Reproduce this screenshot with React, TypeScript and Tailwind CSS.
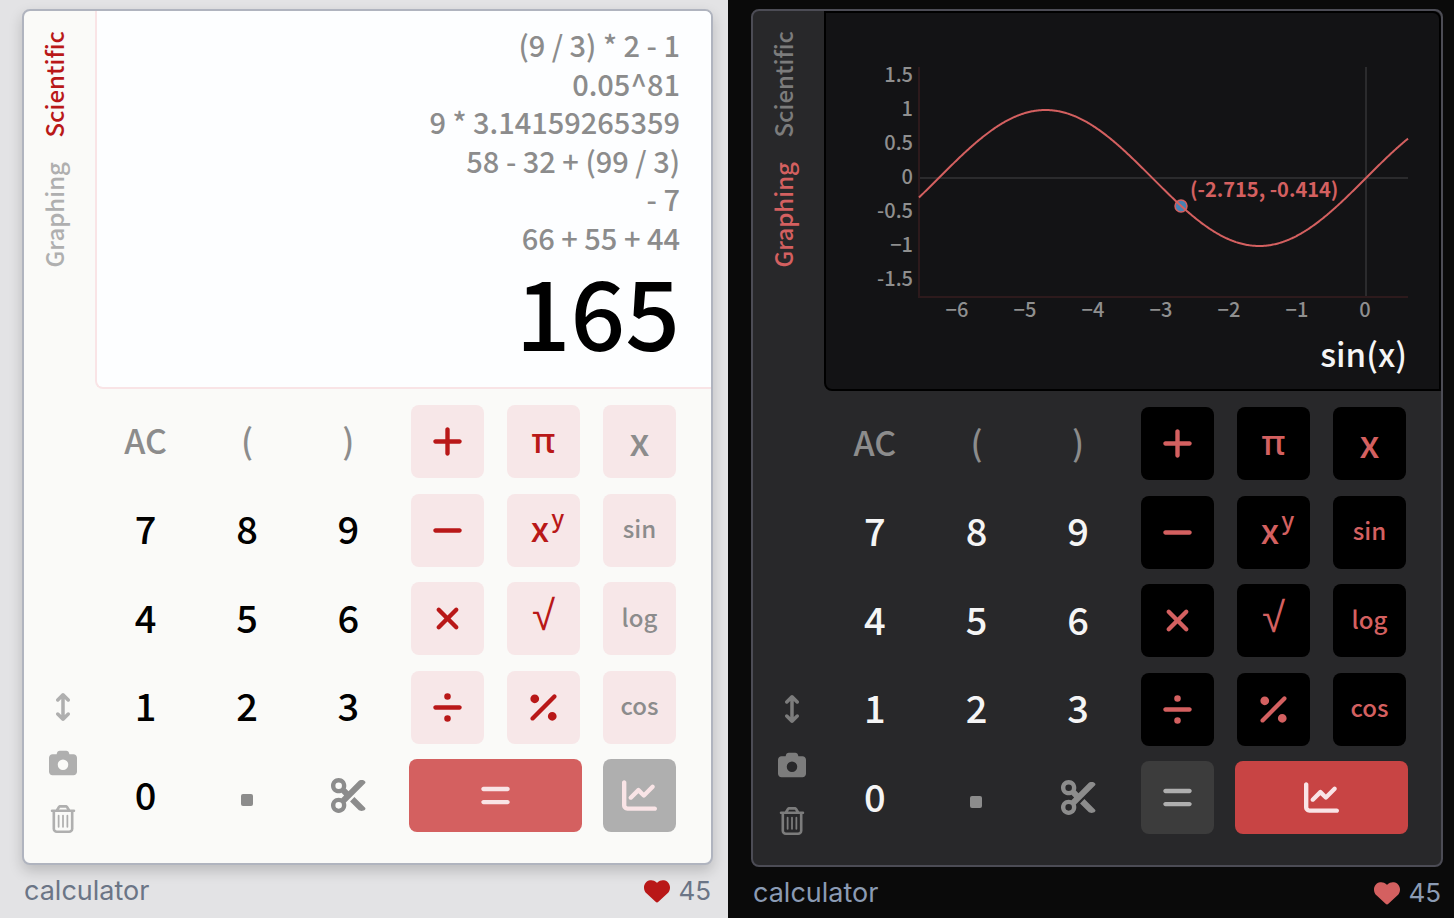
import type { ReactNode } from "react";
import clsx from "clsx";
import {
  FaArrowsUpDown,
  FaCamera,
  FaChartLine,
  FaDivide,
  FaEquals,
  FaHeart,
  FaMinus,
  FaPercent,
  FaPlus,
  FaRegTrashCan,
  FaScissors,
  FaXmark,
} from "react-icons/fa6";

type Mode = "scientific" | "graphing";

const HISTORY = [
  "(9 / 3) * 2 - 1",
  "0.05^81",
  "9 * 3.14159265359",
  "58 - 32 + (99 / 3)",
  "- 7",
  "66 + 55 + 44",
];

const UNIT = 68;
const ORIGIN_X = 540;
const ORIGIN_Y = 165;
const LEFT = 93;
const RIGHT = 582;
const TOP = 54;
const BOTTOM = 284;

function sinePath() {
  const points: string[] = [];
  for (let x = LEFT; x <= RIGHT; x += 1) {
    const y = ORIGIN_Y - Math.sin((x - ORIGIN_X) / UNIT) * UNIT;
    points.push(`${x} ${y.toFixed(2)}`);
  }
  return `M${points.join("L")}`;
}

function Graph() {
  return (
    <svg viewBox="0 0 613 314" className="block w-full text-[20px]" role="img" aria-label="Graph of sin(x)">
      <path d={`M${LEFT} ${ORIGIN_Y}H${RIGHT}M${ORIGIN_X} ${TOP}V${BOTTOM}`} stroke="#2b2b2d" strokeWidth="2" fill="none" />
      <path d={`M${LEFT} ${TOP}V${BOTTOM}H${RIGHT}`} stroke="#2d1a1c" strokeWidth="2" fill="none" />
      <g fill="#8f8f8f" textAnchor="end">
        {["1.5", "1", "0.5", "0", "-0.5", "−1", "-1.5"].map((label, i) => (
          <text key={label} x="87" y={69 + i * 34}>{label}</text>
        ))}
      </g>
      <g fill="#8f8f8f" textAnchor="middle">
        {["−6", "−5", "−4", "−3", "−2", "−1", "0"].map((label, i) => (
          <text key={label} x={131 + i * 68} y="304">{label}</text>
        ))}
      </g>
      <circle cx="355" cy="193" r="6" fill="#4682b4" stroke="#d46060" strokeWidth="1.5" />
      <path d={sinePath()} stroke="#d46060" strokeWidth="2" fill="none" />
      <text x="364" y="184" fill="#d46060" className="font-bold">(-2.715, -0.414)</text>
    </svg>
  );
}

function Key({ label, className, children }: { label: string; className?: string; children: ReactNode }) {
  return (
    <button
      type="button"
      aria-label={label}
      className={clsx("flex h-[73px] items-center justify-center rounded-lg", className)}
    >
      {children}
    </button>
  );
}

function Calculator({ mode }: { mode: Mode }) {
  const dark = mode === "graphing";
  const digit = clsx("pb-1 text-[38px] leading-none", dark ? "text-[#f5f5f5]" : "text-black");
  const muted = "text-[#8c8c8c] leading-none";
  const opColors = dark ? "bg-black text-[#d46060]" : "bg-[#f7e7e8] text-[#b91818]";
  const fnColors = dark ? "bg-black text-[#d46060]" : "bg-[#f7e7e8] text-[#8c8c8c]";
  const op = clsx("text-[35px] leading-none", opColors);
  const symbol = clsx("font-['Noto_Sans',sans-serif] leading-none", opColors);
  const fn = clsx("pb-1 text-2xl leading-none", fnColors);
  const tabOff = dark ? "text-[#7c7c7c]" : "text-[#afafaf]";
  const tabOn = dark ? "text-[#d46060]" : "text-[#b91818]";
  const tab = "rotate-180 text-2xl leading-[30px] [writing-mode:vertical-rl]";

  return (
    <section className={clsx("min-h-screen pt-[9px]", dark ? "bg-[#0a0a0a] pl-[23px] pr-[11px]" : "bg-[#e3e3e5] pl-[22px] pr-[15px]")}>
      <div
        className={clsx(
          "flex overflow-hidden rounded-lg border-2 font-['Noto_Sans_CJK_JP','Noto_Sans',sans-serif] font-medium",
          dark ? "border-[#4c4c55] bg-[#28282a]" : "border-[#b0b4bf] bg-[#fafaf8] shadow-[0_6px_14px_rgba(0,0,0,0.18)]",
        )}
      >
        <aside className="flex w-[71px] shrink-0 flex-col justify-between pb-[30px] pt-5">
          <div className="flex flex-col items-start gap-6 pl-[15px]">
            <button type="button" className={clsx(tab, dark ? tabOff : tabOn)}>Scientific</button>
            <button type="button" className={clsx(tab, dark ? tabOn : tabOff)}>Graphing</button>
          </div>
          <div className={clsx("flex flex-col items-center gap-7 pl-1.5 text-[28px]", tabOff)}>
            <button type="button" aria-label="Resize"><FaArrowsUpDown /></button>
            <button type="button" aria-label="Take picture"><FaCamera /></button>
            <button type="button" aria-label="Clear history"><FaRegTrashCan /></button>
          </div>
        </aside>

        <div className="min-w-0 flex-1">
          {dark ? (
            <div className="h-[380px] rounded-bl-lg rounded-tr-lg border-2 border-black bg-[#131315]">
              <Graph />
              <output className="block pr-8 text-right text-[33px] leading-[52px] text-[#f5f5f5]">sin(x)</output>
            </div>
          ) : (
            <div className="h-[378px] rounded-bl-lg border-b-2 border-l-2 border-[#f9e4e6] bg-[#fdfeff] pr-[31px] pt-3.5 text-right">
              <div className="flex h-[231px] flex-col justify-between text-[29px] leading-[38px] text-[#8c8c8c]">
                {HISTORY.map((line) => (
                  <p key={line}>{line}</p>
                ))}
              </div>
              <output className="block text-[96px] leading-[108px] text-black">165</output>
            </div>
          )}

          <div className="flex gap-3 pb-[31px] pr-[35px] pt-4">
            <div className="grid h-[427px] flex-1 grid-cols-3 content-between">
              <Key label="All clear" className={clsx(muted, "pb-1 text-[34px]")}>AC</Key>
              <Key label="Open parenthesis" className={clsx(muted, "pb-1 text-[34px]")}>(</Key>
              <Key label="Close parenthesis" className={clsx(muted, "pb-1 text-[34px]")}>)</Key>
              {["7", "8", "9", "4", "5", "6", "1", "2", "3", "0"].map((n) => (
                <Key key={n} label={n} className={digit}>{n}</Key>
              ))}
              <Key label="Decimal point" className="pt-2">
                <span className="size-3 rounded-xs bg-[#8c8c8c]" />
              </Key>
              <Key label="Cut" className={clsx(muted, "text-[35px]")}><FaScissors /></Key>
            </div>

            <div className="grid h-[427px] grid-cols-[repeat(3,73px)] content-between gap-x-[23px]">
              <Key label="Plus" className={op}><FaPlus /></Key>
              <Key label="Pi" className={clsx(symbol, "pb-1 text-[35px]")}>π</Key>
              <Key label="x" className={clsx(fnColors, "pb-1 text-[38px] leading-none")}>x</Key>
              <Key label="Minus" className={op}><FaMinus /></Key>
              <Key label="x to the power y" className={clsx(opColors, "pb-2 text-[35px] leading-none")}>
                <span className="flex gap-0.5 pl-2">
                  x<sup className="top-0 -mt-1 text-2xl leading-none">y</sup>
                </span>
              </Key>
              <Key label="sin" className={fn}>sin</Key>
              <Key label="Times" className={op}><FaXmark /></Key>
              <Key label="Square root" className={clsx(symbol, "pb-2.5 text-[42px]")}>√</Key>
              <Key label="log" className={fn}>log</Key>
              <Key label="Divide" className={op}><FaDivide /></Key>
              <Key label="Percent" className={op}><FaPercent /></Key>
              <Key label="cos" className={fn}>cos</Key>
              <Key
                label="Equals"
                className={clsx("text-[35px]", dark ? "bg-[#3c3c3c] text-[#afafaf]" : "col-span-2 -mx-0.5 bg-[#d46060] text-[#f9e4e6]")}
              >
                <FaEquals />
              </Key>
              <Key
                label="Graph"
                className={clsx("text-[35px] text-[#f9e4e6]", dark ? "col-span-2 -mx-0.5 bg-[#c84444]" : "bg-[#afafaf]")}
              >
                <FaChartLine />
              </Key>
            </div>
          </div>
        </div>
      </div>

      <footer
        className={clsx(
          "flex items-center justify-between px-0.5 pt-2 font-['Inter',sans-serif] text-[27px] leading-9",
          dark ? "text-[#8b9bb4]" : "text-[#6b7586]",
        )}
      >
        <span>calculator</span>
        <span className="flex items-center gap-2 text-[26px]">
          <FaHeart className={tabOn} />
          45
        </span>
      </footer>
    </section>
  );
}

export default function App() {
  return (
    <main className="grid grid-cols-[728fr_726fr]">
      <Calculator mode="scientific" />
      <Calculator mode="graphing" />
    </main>
  );
}
